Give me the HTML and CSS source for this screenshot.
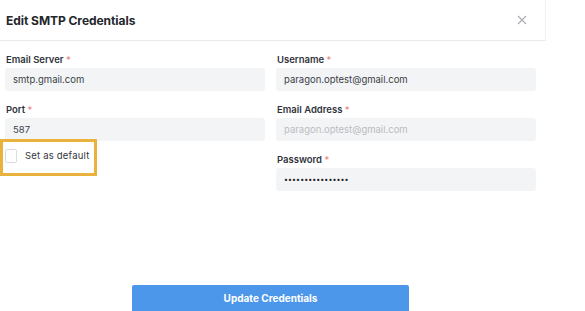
FILE: index.html
```html
<!DOCTYPE html>
<html>
<head>
<meta charset="utf-8">
<link rel="stylesheet" href="styles.css">
</head>
<body>
<div class="modal">
  <div class="header">
    <h1 class="title">Edit SMTP Credentials</h1>
    <svg class="close" width="10" height="10" viewBox="0 0 10 10"><path d="M1 1L9 9M9 1L1 9" stroke="#a9adb3" stroke-width="1.1" fill="none"/></svg>
  </div>
  <div class="body">
    <div class="col">
      <div class="field">
        <div class="label">Email Server <span class="req">*</span></div>
        <div class="input">smtp.gmail.com</div>
      </div>
      <div class="field">
        <div class="label">Port <span class="req">*</span></div>
        <div class="input">587</div>
      </div>
      <div class="check-row">
        <span class="checkbox"></span>
        <span class="check-label">Set as default</span>
        <span class="highlight"></span>
      </div>
    </div>
    <div class="col">
      <div class="field">
        <div class="label">Username <span class="req">*</span></div>
        <div class="input">paragon.optest@gmail.com</div>
      </div>
      <div class="field">
        <div class="label">Email Address <span class="req">*</span></div>
        <div class="input placeholder">paragon.optest@gmail.com</div>
      </div>
      <div class="field">
        <div class="label">Password <span class="req">*</span></div>
        <div class="input dots">••••••••••••••••</div>
      </div>
    </div>
  </div>
  <div class="footer">
    <button class="btn">Update Credentials</button>
  </div>
</div>
</body>
</html>
```
FILE: styles.css
```css
html, body {
  margin: 0;
  padding: 0;
  background: #ffffff;
  font-family: Inter, "Open Sans", sans-serif;
  color: #2b2f36;
}
.modal {
  width: 546px;
  height: 311px;
  overflow: hidden;
  display: flex;
  flex-direction: column;
}
.header {
  height: 41px;
  box-sizing: border-box;
  border-bottom: 1px solid #e9eaec;
  border-right: 1px solid #f1f1f1;
  display: flex;
  align-items: center;
  justify-content: space-between;
  padding: 0 18px 0 6px;
}
.title {
  margin: 0;
  font-size: 12px;
  font-weight: 700;
  color: #23262b;
  letter-spacing: -0.05px;
}
.close {
  display: block;
}
.body {
  display: grid;
  grid-template-columns: 260px 260px;
  column-gap: 11px;
  padding: 12px 0 0 5px;
}
.col {
  display: flex;
  flex-direction: column;
  gap: 12px;
}
.field {
  display: flex;
  flex-direction: column;
  gap: 1px;
}
.label {
  font-size: 9.5px;
  font-weight: 600;
  line-height: 14px;
  color: #2f333a;
  padding-left: 1px;
}
.req {
  color: #e8837d;
  font-weight: 400;
}
.input {
  height: 23px;
  box-sizing: border-box;
  background: #f3f4f6;
  border-radius: 3px;
  font-size: 9.5px;
  line-height: 23px;
  padding-left: 8px;
  color: #3a3e45;
}
.input.placeholder {
  color: #b9bcc2;
}
.input.dots {
  font-size: 7px;
  letter-spacing: 0.1px;
  color: #222;
}
.check-row {
  position: relative;
  display: flex;
  align-items: center;
  gap: 8px;
  height: 25px;
  margin-top: -10px;
}
.checkbox {
  width: 12px;
  height: 14px;
  box-sizing: border-box;
  border: 1px solid #d9dbe0;
  border-radius: 2px;
  background: #fff;
}
.check-label {
  font-size: 9.5px;
  color: #33363c;
  letter-spacing: 0.2px;
}
.highlight {
  position: absolute;
  left: -5px;
  top: -4px;
  width: 97px;
  height: 37px;
  box-sizing: border-box;
  border: 3px solid #e9b23c;
  pointer-events: none;
}
.footer {
  margin-top: auto;
  display: flex;
  justify-content: center;
  padding-right: 5px;
}
.btn {
  width: 277px;
  height: 26px;
  border: none;
  border-radius: 2px 2px 0 0;
  background: #4d97ea;
  color: #fff;
  font-family: Inter, "Open Sans", sans-serif;
  font-size: 10px;
  font-weight: 700;
  padding: 0 0 1px 0;
}
```
